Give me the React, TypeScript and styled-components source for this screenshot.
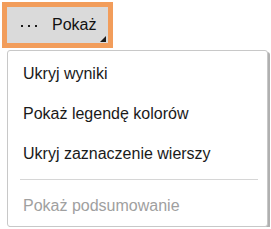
import React from "react";
import styled, { createGlobalStyle } from "styled-components";

const Global = createGlobalStyle`
  html, body { margin: 0; padding: 0; background: #ffffff; }
  body { font-family: "Liberation Sans", Arial, sans-serif; }
`;

const Page = styled.div`
  padding: 2px 0 0 2px;
  display: flex;
  flex-direction: column;
  align-items: flex-start;
`;

const ToggleButton = styled.button`
  position: relative;
  box-sizing: border-box;
  width: 111px;
  height: 46px;
  border: 5px solid #f29d5b;
  background: #dadada;
  display: flex;
  align-items: center;
  gap: 15px;
  padding: 0 0 0 14px;
  margin: 0;
  font-family: "Liberation Sans", Arial, sans-serif;
  font-size: 16px;
  color: #111111;
  cursor: pointer;
`;

const Dots = styled.span`
  display: flex;
  gap: 5px;
  align-items: center;
  padding-top: 2px;
`;

const Dot = styled.span`
  width: 2px;
  height: 2px;
  background: #1a1a1a;
`;

const Corner = styled.span`
  position: absolute;
  right: 2px;
  bottom: 1px;
  width: 0;
  height: 0;
  border-left: 6px solid transparent;
  border-bottom: 6px solid #1a1a1a;
`;

const Menu = styled.div`
  box-sizing: border-box;
  margin: 2px 0 0 5px;
  width: 261px;
  border: 1px solid #c8c8c8;
  border-radius: 3px;
  box-shadow: 2px 2px 0 #b0b0b0;
  background: #ffffff;
  padding-top: 3px;
  display: flex;
  flex-direction: column;
`;

const Item = styled.div<{ $disabled?: boolean }>`
  height: 40px;
  display: flex;
  align-items: center;
  padding-left: 15px;
  font-size: 16px;
  color: ${(p) => (p.$disabled ? "#a0a0a0" : "#1a1a1a")};
  white-space: nowrap;
`;

const Separator = styled.div`
  height: 1px;
  background: #d6d6d6;
  margin: 5px 9px 6px 12px;
`;

export default function App() {
  return (
    <>
      <Global />
      <Page>
        <ToggleButton>
          <Dots>
            <Dot />
            <Dot />
            <Dot />
          </Dots>
          Pokaż
          <Corner />
        </ToggleButton>
        <Menu>
          <Item>Ukryj wyniki</Item>
          <Item>Pokaż legendę kolorów</Item>
          <Item>Ukryj zaznaczenie wierszy</Item>
          <Separator />
          <Item $disabled>Pokaż podsumowanie</Item>
        </Menu>
      </Page>
    </>
  );
}
